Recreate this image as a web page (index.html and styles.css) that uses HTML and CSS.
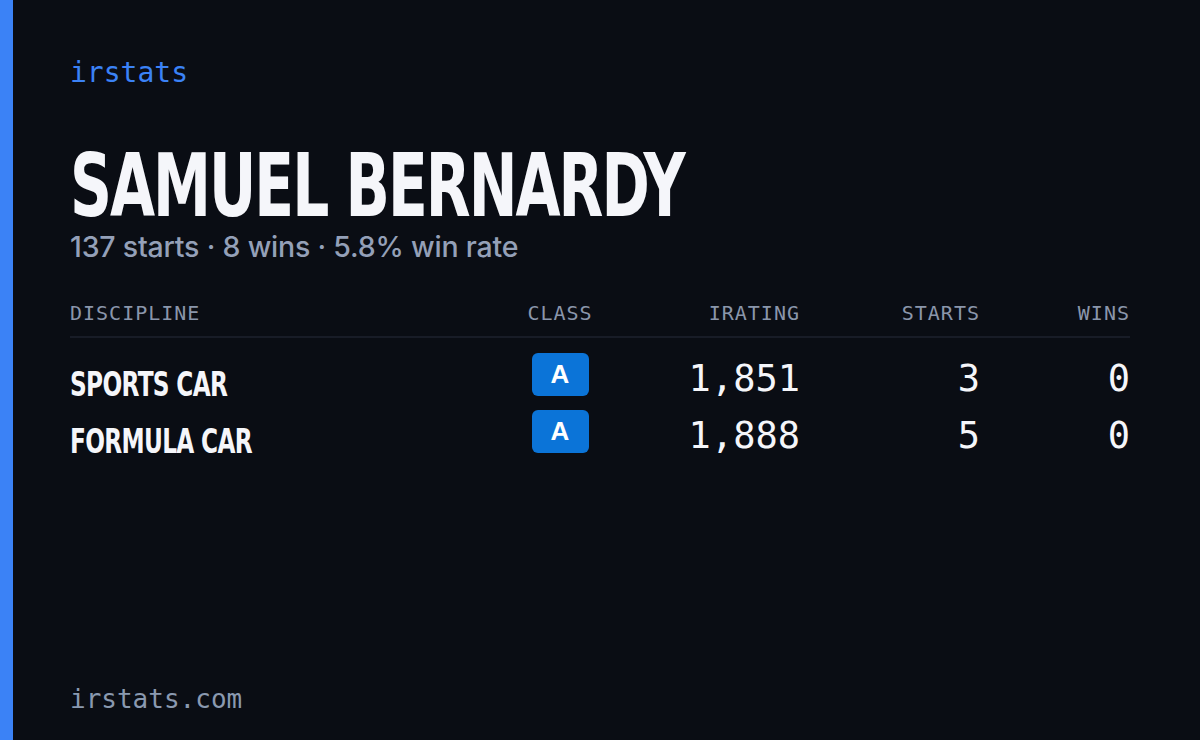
FILE: index.html
```html
<!DOCTYPE html>
<html>
<head>
<meta charset="utf-8">
<link rel="stylesheet" href="styles.css">
</head>
<body>
<div class="card">
  <div class="stripe"></div>
  <main class="content">
    <div class="brand">irstats</div>
    <h1 class="name"><span class="squeeze">SAMUEL BERNARDY</span></h1>
    <div class="summary">137 starts · 8 wins · 5.8% win rate</div>
    <div class="table">
      <div class="row head">
        <div class="c-disc">DISCIPLINE</div>
        <div class="c-class">CLASS</div>
        <div class="c-num">IRATING</div>
        <div class="c-num">STARTS</div>
        <div class="c-num">WINS</div>
      </div>
      <div class="row body">
        <div class="c-disc disc"><span class="squeeze">SPORTS CAR</span></div>
        <div class="c-class"><span class="badge">A</span></div>
        <div class="c-num num">1,851</div>
        <div class="c-num num">3</div>
        <div class="c-num num">0</div>
      </div>
      <div class="row body">
        <div class="c-disc disc"><span class="squeeze">FORMULA CAR</span></div>
        <div class="c-class"><span class="badge">A</span></div>
        <div class="c-num num">1,888</div>
        <div class="c-num num">5</div>
        <div class="c-num num">0</div>
      </div>
    </div>
    <div class="spacer"></div>
    <div class="footer">irstats.com</div>
  </main>
</div>
</body>
</html>
```

FILE: styles.css
```css
html, body {
  margin: 0;
  padding: 0;
  background: #0a0d14;
}
.card {
  width: 1200px;
  height: 740px;
  display: flex;
  background: #0a0d14;
  overflow: hidden;
}
.stripe {
  width: 13px;
  background: #3b82f6;
  flex: none;
}
.content {
  flex: 1;
  display: flex;
  flex-direction: column;
  padding: 56px 70px 24px 57px;
}
.brand {
  font-family: "DejaVu Sans Mono", monospace;
  font-size: 28px;
  color: #3b82f6;
  line-height: 34px;
}
.squeeze {
  display: inline-block;
  transform-origin: left center;
  white-space: nowrap;
}
.name {
  margin: 58px 0 0 0;
  font-family: "DejaVu Sans", sans-serif;
  font-weight: bold;
  font-size: 88px;
  line-height: 76px;
  letter-spacing: -3px;
  color: #f5f6fa;
}
.name .squeeze { transform: scaleX(0.662); }
.summary {
  margin-top: 5px;
  font-family: "Inter", sans-serif;
  font-weight: 500;
  font-size: 28.5px;
  color: #94a0b8;
  line-height: 36px;
  letter-spacing: -0.2px;
}
.table {
  margin-top: 32px;
}
.row {
  display: grid;
  grid-template-columns: 440px 100px 190px 180px 150px;
  align-items: center;
}
.head {
  box-sizing: border-box;
  font-family: "DejaVu Sans Mono", monospace;
  font-size: 20px;
  letter-spacing: 1px;
  color: #8a96ab;
  height: 41px;
  padding-bottom: 7px;
  border-bottom: 2px solid #181c27;
}
.body {
  height: 57px;
}
.table .head + .body { margin-top: 10px; }
.c-class { text-align: center; }
.c-num { text-align: right; }
.disc {
  font-family: "DejaVu Sans", sans-serif;
  font-weight: bold;
  font-size: 34px;
  letter-spacing: -1px;
  color: #f5f6fa;
  padding-top: 14px;
}
.disc .squeeze { transform: scaleX(0.684); }
.body .c-class { padding-bottom: 5px; }
.badge {
  display: inline-block;
  width: 57px;
  height: 43px;
  line-height: 43px;
  border-radius: 6px;
  background: #0b74d8;
  color: #ffffff;
  font-family: "Liberation Sans", Arial, sans-serif;
  font-weight: bold;
  font-size: 26px;
  text-align: center;
  vertical-align: top;
}
.num {
  font-family: "DejaVu Sans Mono", monospace;
  font-size: 37px;
  color: #f5f6fa;
  padding-top: 4px;
}
.spacer { flex: 1; }
.footer {
  font-family: "DejaVu Sans Mono", monospace;
  font-size: 26px;
  color: #8a99b0;
  line-height: 34px;
}
```
